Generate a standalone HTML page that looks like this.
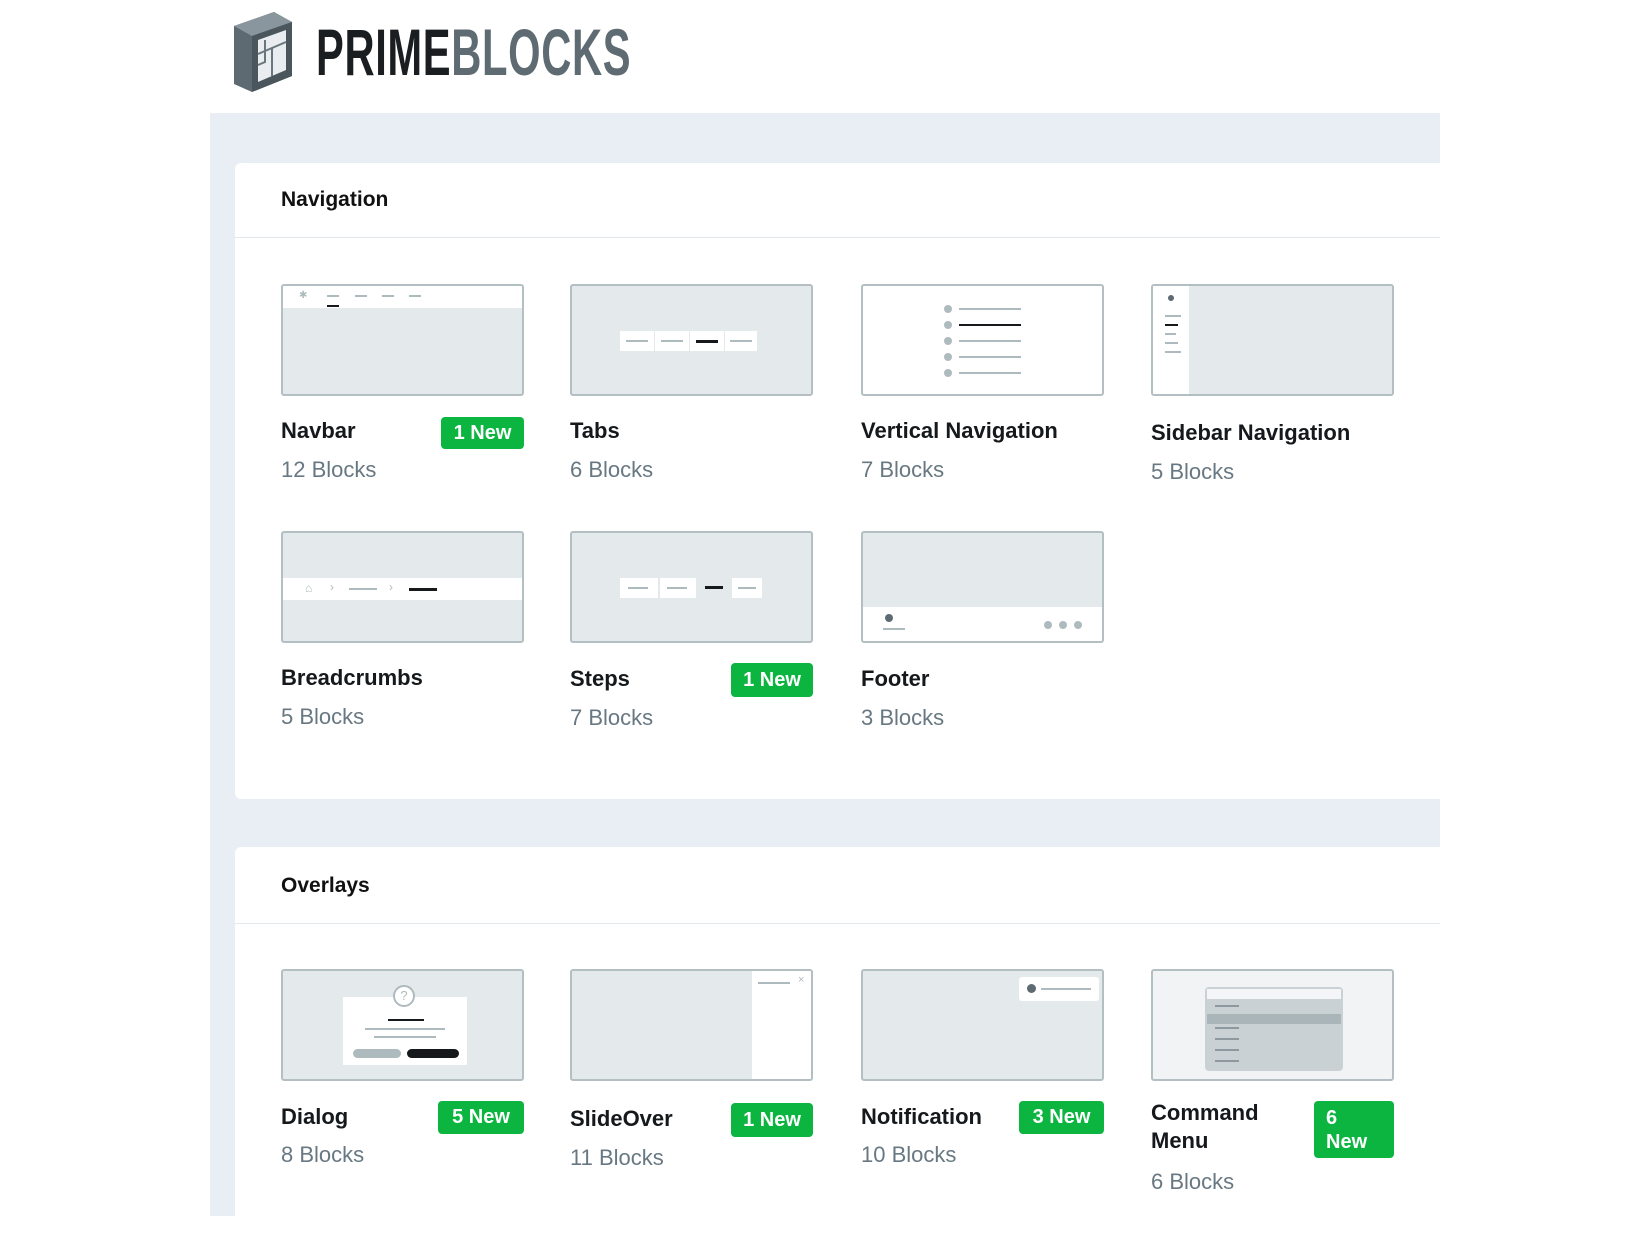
<!DOCTYPE html>
<html><head><meta charset="utf-8">
<style>
*{margin:0;padding:0;box-sizing:border-box}
body{width:1650px;height:1216px;background:#fff;position:relative;overflow:hidden;font-family:"Liberation Sans",Arial,sans-serif}
.a{position:absolute}
.panel{left:210px;top:113px;width:1230px;height:1103px;background:#e9eef4}
.card{background:#fff;border-radius:6px 0 0 6px}
.hdr{font-weight:bold;font-size:21px;color:#111}
.div{height:1px;background:#e3e8ec}
.th{width:243px;height:112px;background:#e4e9eb;border:2px solid #b3bfc2;border-radius:3px;overflow:hidden}
.t{font-weight:bold;font-size:22px;color:#15191c}
.b{font-size:22px;color:#687882}
.bd{background:#0bb540;color:#fff;font-size:20px;font-weight:bold;border-radius:4px;text-align:center}
.w{position:absolute;background:#fff}
.l{position:absolute;height:2px;background:#aebbbe}
.k{position:absolute;height:3px;background:#16191b}
.dot{position:absolute;width:8px;height:8px;border-radius:50%;background:#aebbbe}
</style></head><body>

<svg class="a" style="left:232px;top:10px" width="64" height="84" viewBox="0 0 64 84">
<polygon points="2,16 42,2 60,12 60,66 20,82 2,74" fill="#5d6a72"/>
<polygon points="2,16 42,2 60,12 20,26" fill="#8a969d"/>
<polygon points="20,26 60,12 60,66 20,82" fill="#4a555c"/>
<polygon points="26,30 54,20 54,60 26,72" fill="#e9edef"/>
<path d="M26 44 L40 38 L40 66 M40 38 L54 32 M33 30 L33 52 L26 55" stroke="#6a767d" stroke-width="2" fill="none"/>
</svg>
<div class="a" style="left:316px;top:14px;font-size:66px;font-weight:bold;line-height:76px;transform:scaleX(0.632);transform-origin:left top;letter-spacing:1px;white-space:nowrap"><span style="color:#1b1e20">PRIME</span><span style="color:#5f6b72">BLOCKS</span></div>

<div class="a panel"></div>

<div class="a card" style="left:235px;top:163px;width:1205px;height:636px"></div>
<div class="a hdr" style="left:281px;top:188px">Navigation</div>
<div class="a div" style="left:235px;top:237px;width:1205px"></div>

<div class="a th" style="left:281px;top:284px">
  <div class="w" style="left:0;top:0;width:100%;height:22px"></div>
  <div class="a" style="left:16px;top:4px;font-size:10px;color:#aebbbe">✱</div>
  <div class="l" style="left:44px;top:9px;width:12px"></div><div class="k" style="left:44px;top:19px;width:12px;height:2px"></div>
  <div class="l" style="left:72px;top:9px;width:12px"></div>
  <div class="l" style="left:99px;top:9px;width:12px"></div>
  <div class="l" style="left:126px;top:9px;width:12px"></div>
</div>
<div class="a t" style="left:281px;top:418px">Navbar</div>
<div class="a bd" style="left:441px;top:417px;width:83px;height:32px;line-height:32px">1 New</div>
<div class="a b" style="left:281px;top:457px">12 Blocks</div>

<div class="a th" style="left:570px;top:284px">
  <div class="w" style="left:48px;top:45px;width:34px;height:20px"></div><div class="l" style="left:54px;top:54px;width:22px"></div>
  <div class="w" style="left:83px;top:45px;width:34px;height:20px"></div><div class="l" style="left:89px;top:54px;width:22px"></div>
  <div class="w" style="left:118px;top:45px;width:34px;height:20px"></div><div class="k" style="left:124px;top:54px;width:22px"></div>
  <div class="w" style="left:153px;top:45px;width:32px;height:20px"></div><div class="l" style="left:158px;top:54px;width:22px"></div>
</div>
<div class="a t" style="left:570px;top:418px">Tabs</div>
<div class="a b" style="left:570px;top:457px">6 Blocks</div>

<div class="a th" style="left:861px;top:284px;background:#fff">
  <div class="dot" style="left:81px;top:19px"></div><div class="l" style="left:96px;top:22px;width:62px"></div>
  <div class="dot" style="left:81px;top:35px"></div><div class="k" style="left:96px;top:38px;width:62px;height:2px"></div>
  <div class="dot" style="left:81px;top:51px"></div><div class="l" style="left:96px;top:54px;width:62px"></div>
  <div class="dot" style="left:81px;top:67px"></div><div class="l" style="left:96px;top:70px;width:62px"></div>
  <div class="dot" style="left:81px;top:83px"></div><div class="l" style="left:96px;top:86px;width:62px"></div>
</div>
<div class="a t" style="left:861px;top:418px">Vertical Navigation</div>
<div class="a b" style="left:861px;top:457px">7 Blocks</div>

<div class="a th" style="left:1151px;top:284px">
  <div class="w" style="left:0;top:0;width:36px;height:100%"></div>
  <div class="dot" style="left:15px;top:9px;width:6px;height:6px;background:#5d6a72"></div>
  <div class="l" style="left:12px;top:29px;width:16px"></div>
  <div class="k" style="left:12px;top:38px;width:13px;height:2px"></div>
  <div class="l" style="left:12px;top:47px;width:11px"></div>
  <div class="l" style="left:12px;top:56px;width:13px"></div>
  <div class="l" style="left:12px;top:65px;width:16px"></div>
</div>
<div class="a t" style="left:1151px;top:420px">Sidebar Navigation</div>
<div class="a b" style="left:1151px;top:459px">5 Blocks</div>

<div class="a th" style="left:281px;top:531px">
  <div class="w" style="left:0;top:45px;width:100%;height:22px"></div>
  <div class="a" style="left:22px;top:48px;font-size:12px;color:#aebbbe">⌂</div>
  <div class="a" style="left:47px;top:47px;font-size:12px;color:#aebbbe">›</div>
  <div class="l" style="left:66px;top:55px;width:28px"></div>
  <div class="a" style="left:106px;top:47px;font-size:12px;color:#aebbbe">›</div>
  <div class="k" style="left:126px;top:55px;width:28px"></div>
</div>
<div class="a t" style="left:281px;top:665px">Breadcrumbs</div>
<div class="a b" style="left:281px;top:704px">5 Blocks</div>

<div class="a th" style="left:570px;top:531px">
  <div class="w" style="left:48px;top:45px;width:38px;height:20px"></div><div class="l" style="left:56px;top:54px;width:20px"></div>
  <div class="w" style="left:88px;top:45px;width:36px;height:20px"></div><div class="l" style="left:95px;top:54px;width:20px"></div>
  <div class="k" style="left:133px;top:53px;width:18px"></div>
  <div class="w" style="left:160px;top:45px;width:30px;height:20px"></div><div class="l" style="left:166px;top:54px;width:18px"></div>
</div>
<div class="a t" style="left:570px;top:666px">Steps</div>
<div class="a bd" style="left:731px;top:663px;width:82px;height:34px;line-height:34px">1 New</div>
<div class="a b" style="left:570px;top:705px">7 Blocks</div>

<div class="a th" style="left:861px;top:531px">
  <div class="w" style="left:0;top:74px;width:100%;height:40px"></div>
  <div class="dot" style="left:22px;top:81px;background:#5d6a72"></div>
  <div class="l" style="left:20px;top:95px;width:22px"></div>
  <div class="dot" style="left:181px;top:88px"></div><div class="dot" style="left:196px;top:88px"></div><div class="dot" style="left:211px;top:88px"></div>
</div>
<div class="a t" style="left:861px;top:666px">Footer</div>
<div class="a b" style="left:861px;top:705px">3 Blocks</div>

<div class="a card" style="left:235px;top:847px;width:1205px;height:400px"></div>
<div class="a hdr" style="left:281px;top:874px">Overlays</div>
<div class="a div" style="left:235px;top:923px;width:1205px"></div>

<div class="a th" style="left:281px;top:969px">
  <div class="w" style="left:60px;top:26px;width:124px;height:68px"></div>
  <div class="a" style="left:110px;top:14px;width:22px;height:22px;border-radius:50%;background:#fff;border:2px solid #aebbbe;font-size:13px;color:#aebbbe;text-align:center;line-height:18px">?</div>
  <div class="k" style="left:105px;top:48px;width:36px;height:2px"></div>
  <div class="l" style="left:82px;top:57px;width:80px"></div>
  <div class="l" style="left:91px;top:65px;width:62px"></div>
  <div class="a" style="left:70px;top:78px;width:48px;height:9px;border-radius:5px;background:#aebbbe"></div>
  <div class="a" style="left:124px;top:78px;width:52px;height:9px;border-radius:5px;background:#16191b"></div>
</div>
<div class="a t" style="left:281px;top:1104px">Dialog</div>
<div class="a bd" style="left:438px;top:1101px;width:86px;height:33px;line-height:33px">5 New</div>
<div class="a b" style="left:281px;top:1142px">8 Blocks</div>

<div class="a th" style="left:570px;top:969px">
  <div class="w" style="left:180px;top:0;width:64px;height:100%"></div>
  <div class="l" style="left:186px;top:11px;width:32px"></div>
  <div class="a" style="left:226px;top:3px;font-size:11px;color:#aebbbe">×</div>
</div>
<div class="a t" style="left:570px;top:1106px">SlideOver</div>
<div class="a bd" style="left:731px;top:1103px;width:82px;height:34px;line-height:34px">1 New</div>
<div class="a b" style="left:570px;top:1145px">11 Blocks</div>

<div class="a th" style="left:861px;top:969px">
  <div class="w" style="left:156px;top:6px;width:80px;height:24px;border-radius:3px"></div>
  <div class="dot" style="left:164px;top:13px;width:9px;height:9px;background:#5d6a72"></div>
  <div class="l" style="left:178px;top:17px;width:50px"></div>
</div>
<div class="a t" style="left:861px;top:1104px">Notification</div>
<div class="a bd" style="left:1019px;top:1101px;width:85px;height:33px;line-height:33px">3 New</div>
<div class="a b" style="left:861px;top:1142px">10 Blocks</div>

<div class="a th" style="left:1151px;top:969px;background:#f1f3f5">
  <div class="a" style="left:52px;top:16px;width:138px;height:84px;background:#c9d1d4;border-radius:4px"></div>
  <div class="w" style="left:54px;top:18px;width:134px;height:10px;background:#f3f5f6"></div>
  <div class="a" style="left:54px;top:43px;width:134px;height:10px;background:#a9b5b9"></div>
  <div class="l" style="left:62px;top:34px;width:24px;background:#8d999e"></div>
  <div class="l" style="left:62px;top:56px;width:24px;background:#8d999e"></div>
  <div class="l" style="left:62px;top:67px;width:24px;background:#8d999e"></div>
  <div class="l" style="left:62px;top:78px;width:24px;background:#8d999e"></div>
  <div class="l" style="left:62px;top:89px;width:24px;background:#8d999e"></div>
</div>
<div class="a t" style="left:1151px;top:1099px;line-height:28px">Command<br>Menu</div>
<div class="a bd" style="left:1314px;top:1101px;width:80px;height:57px;line-height:24px;text-align:left;padding:5px 0 0 12px">6<br>New</div>
<div class="a b" style="left:1151px;top:1169px">6 Blocks</div>

</body></html>
